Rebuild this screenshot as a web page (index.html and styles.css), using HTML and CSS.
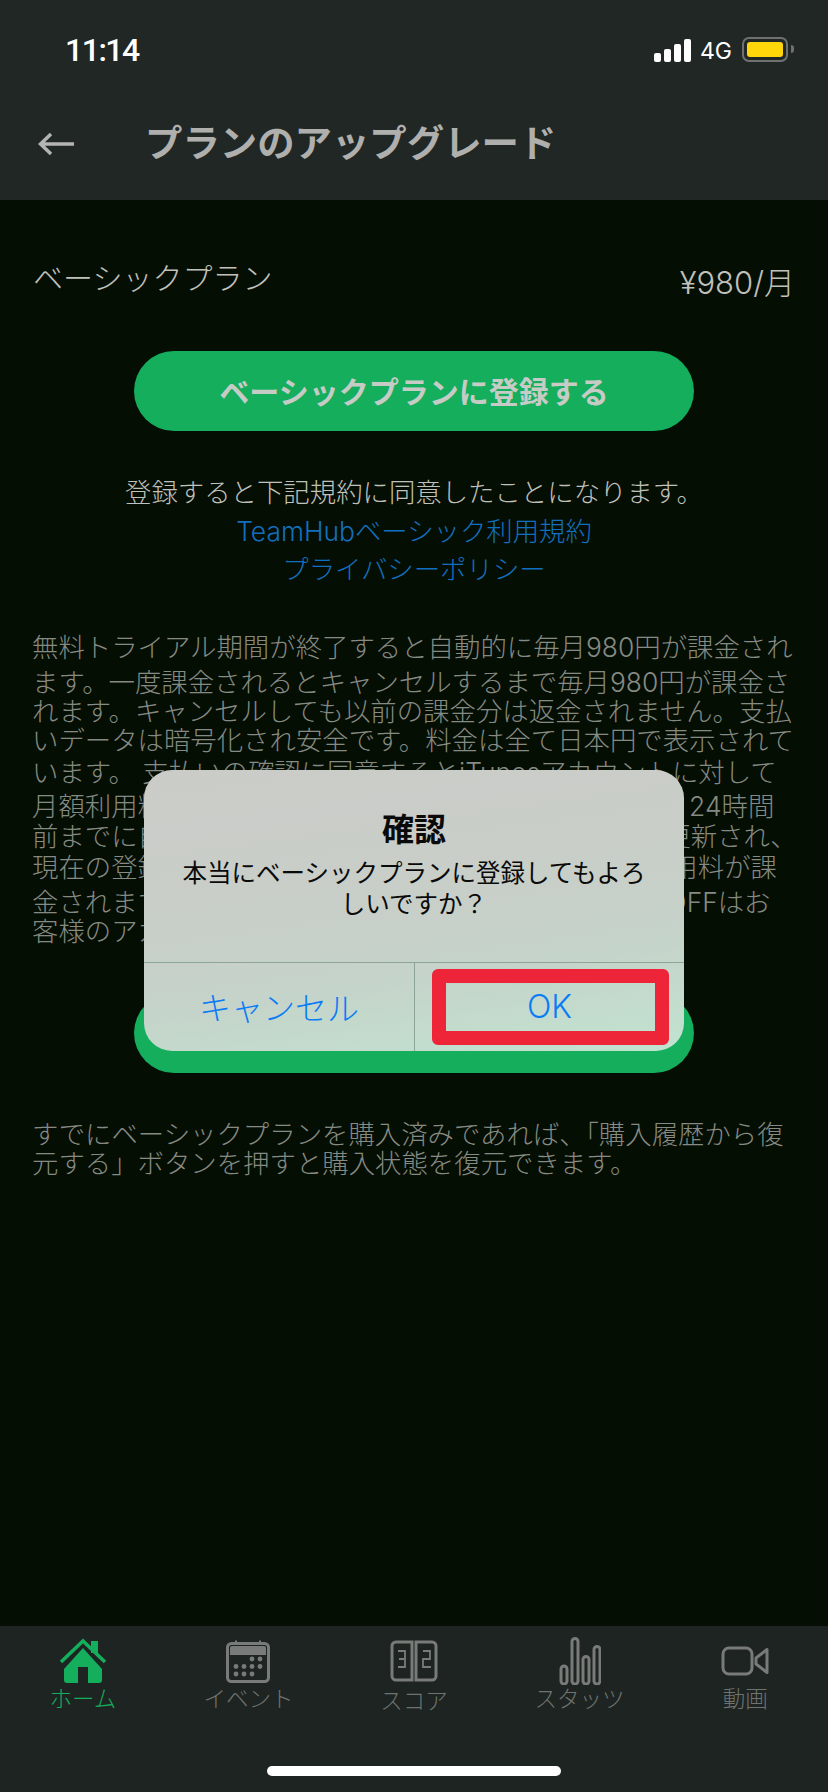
FILE: index.html
```html
<!DOCTYPE html>
<html lang="ja">
<head>
  <meta charset="UTF-8" />
  <meta name="viewport" content="width=device-width, initial-scale=1.0"/>
  <title>プランのアップグレード</title>
  <link rel="stylesheet" href="styles.css">
</head>
<body>

  <div class="screen">
    <header class="top-bar">
      <div class="status-bar">
        <span class="clock">11:14</span>
        <div class="status-right">
          <div class="signal">
            <span class="bar bar-1"></span>
            <span class="bar bar-2"></span>
            <span class="bar bar-3"></span>
            <span class="bar bar-4"></span>
          </div>
          <span class="network">4G</span>
          <div class="battery"><span class="battery-fill"></span></div>
          <span class="battery-nub"></span>
        </div>
      </div>
      <div class="nav-bar">
        <svg class="back-arrow" viewBox="0 0 37 24" width="37" height="24">
          <path d="M36 12H3M13 2 2.500 12 13 22" fill="none" stroke="#b4b4b2" stroke-width="3.500"/>
        </svg>
        <h1 class="nav-title">プランのアップグレード</h1>
      </div>
    </header>

    <main class="content">
      <div class="plan-row">
        <span class="plan-name">ベーシックプラン</span>
        <span class="plan-price">¥980/月</span>
      </div>

      <button class="pill-button">ベーシックプランに登録する</button>

      <div class="terms">
        <p class="terms-note">登録すると下記規約に同意したことになります。</p>
        <a class="terms-link">TeamHubベーシック利用規約</a>
        <a class="terms-link">プライバシーポリシー</a>
      </div>

      <div class="fine-print">
        <div class="line">無料トライアル期間が終了すると自動的に毎月980円が課金され</div>
        <div class="line line-35">ます。一度課金されるとキャンセルするまで毎月980円が課金さ</div>
        <div class="line line-29">れます。キャンセルしても以前の課金分は返金されません。支払</div>
        <div class="line line-29">いデータは暗号化され安全です。料金は全て日本円で表示されて</div>
        <div class="line line-32">います。 支払いの確認に同意するとiTunesアカウントに対して</div>
        <div class="line line-34">月額利用料金が請求されます。現在の契約期間終了日、24時間</div>
        <div class="line line-30">前までに自動更新をオフにしない限り、プランは自動更新され、</div>
        <div class="line line-31">現在の登録期間が終了する前の24時間以内に次月の利用料が課</div>
        <div class="line line-35">金されます。 設定画面からはいつでも自動更新のON/OFFはお</div>
        <div class="line line-29">客様のアカウント設定で変更できます。</div>
      </div>

      <button class="pill-button restore-button">購入履歴から復元する</button>

      <div class="fine-print restore-note">
        <div class="line">すでにベーシックプランを購入済みであれば、「購入履歴から復</div>
        <div class="line line-29">元する」ボタンを押すと購入状態を復元できます。</div>
      </div>
    </main>

    <nav class="tab-bar">
      <div class="tab tab-active">
        <div class="tab-icon">
          <svg viewBox="0 0 48 46" width="48" height="46">
            <rect x="32" y="3" width="7" height="12" fill="#14ae5c"/>
            <path d="M2 24 24 3 46 24" fill="none" stroke="#14ae5c" stroke-width="3.500"/>
            <path d="M5 31 24 10 43 31V42a3 3 0 0 1-3 3H29V29H19V45H8a3 3 0 0 1-3-3Z" fill="#14ae5c"/>
          </svg>
        </div>
        <span class="tab-label">ホーム</span>
      </div>
      <div class="tab">
        <div class="tab-icon">
          <svg viewBox="0 0 44 44" width="44" height="44">
            <rect x="1.500" y="4.500" width="41" height="38" rx="4" fill="none" stroke="#787b79" stroke-width="3"/>
            <path d="M4 16V9a2 2 0 0 1 2-2H38a2 2 0 0 1 2 2V16Z" fill="#787b79"/>
            <path d="M10 1.500V5M34 1.500V5" stroke="#787b79" stroke-width="2"/>
            <g fill="#787b79">
              <circle cx="26" cy="20" r="2.400"/><circle cx="34" cy="20" r="2.400"/>
              <circle cx="10" cy="27.500" r="2.400"/><circle cx="18" cy="27.500" r="2.400"/><circle cx="26" cy="27.500" r="2.400"/><circle cx="34" cy="27.500" r="2.400"/>
              <circle cx="10" cy="35" r="2.400"/><circle cx="18" cy="35" r="2.400"/><circle cx="26" cy="35" r="2.400"/>
            </g>
          </svg>
        </div>
        <span class="tab-label">イベント</span>
      </div>
      <div class="tab tab-score">
        <div class="tab-icon">
          <svg viewBox="0 0 48 42" width="48" height="42">
            <g fill="none" stroke="#787b79">
              <path d="M22 2H6a4 4 0 0 0-4 4V36a4 4 0 0 0 4 4H22ZM26 2H42a4 4 0 0 1 4 4V36a4 4 0 0 1-4 4H26Z" stroke-width="3"/>
              <path d="M8 11H15V27H8M15 19H9M33 11H40V19H33V27H41" stroke-width="1.800"/>
            </g>
          </svg>
        </div>
        <span class="tab-label">スコア</span>
      </div>
      <div class="tab">
        <div class="tab-icon">
          <svg viewBox="0 0 42 48" width="42" height="48">
            <g fill="none" stroke="#787b79" stroke-width="3">
              <rect x="2" y="29" width="6" height="18" rx="3"/>
              <rect x="13" y="1.500" width="6" height="45.500" rx="3"/>
              <rect x="24" y="19.500" width="6" height="27.500" rx="3"/>
              <rect x="35" y="9.500" width="6" height="37.500" rx="3"/>
            </g>
          </svg>
        </div>
        <span class="tab-label">スタッツ</span>
      </div>
      <div class="tab">
        <div class="tab-icon">
          <svg viewBox="0 0 48 30" width="48" height="30">
            <rect x="2" y="2" width="29" height="26" rx="6" fill="none" stroke="#787b79" stroke-width="3"/>
            <path d="M46 3.500V26.500L35 18V12Z" fill="none" stroke="#787b79" stroke-width="3" stroke-linejoin="round"/>
          </svg>
        </div>
        <span class="tab-label">動画</span>
      </div>
      <span class="home-indicator"></span>
    </nav>

    <div class="dialog">
      <div class="dialog-body">
        <h2 class="dialog-title">確認</h2>
        <p class="dialog-text">本当にベーシックプランに登録してもよろしいですか？</p>
      </div>
      <div class="dialog-actions">
        <button class="dialog-button">キャンセル</button>
        <button class="dialog-button">OK</button>
      </div>
      <span class="highlight-box"></span>
    </div>
  </div>

</body>
</html>
```

FILE: styles.css
```css
* {
  box-sizing: border-box;
}

body {
  margin: 0;
  background: #050e02;
  font-family: Inter, "Noto Sans CJK JP", "Noto Sans", sans-serif;
}

p, h1, h2 {
  margin: 0;
}

.screen {
  position: relative;
  display: flex;
  flex-direction: column;
  width: 828px;
  height: 1792px;
  overflow: hidden;
}

/* top */
.top-bar {
  height: 200px;
  background: #212725;
}

.status-bar {
  display: flex;
  justify-content: space-between;
  height: 88px;
  padding: 30px 34px 0 65px;
}

.clock {
  font-family: Roboto, sans-serif;
  font-size: 32px;
  font-weight: 500;
  line-height: 40px;
  letter-spacing: -1.500px;
  color: #fff;
}

.status-right {
  display: flex;
  align-items: flex-start;
  padding-top: 7px;
}

.signal {
  display: flex;
  align-items: flex-end;
  gap: 3px;
  height: 24px;
  margin-top: 1px;
}

.bar {
  width: 7px;
  background: #fff;
  border-radius: 2px;
}

.bar-1 { height: 9px; }
.bar-2 { height: 13px; }
.bar-3 { height: 18px; }
.bar-4 { height: 23px; }

.network {
  margin-left: 9px;
  font-size: 23px;
  line-height: 28px;
  color: #fff;
}

.battery {
  width: 46px;
  height: 25px;
  margin-left: 10px;
  padding: 3px;
  border: 2px solid #6e716f;
  border-radius: 7px;
}

.battery-fill {
  display: block;
  height: 100%;
  background: #ffd60a;
  border-radius: 3px;
}

.battery-nub {
  width: 3px;
  height: 8px;
  margin: 8px 0 0 3px;
  background: #6e716f;
  border-radius: 0 3px 3px 0;
}

.nav-bar {
  display: flex;
  align-items: center;
  height: 112px;
  padding: 0 0 1px 38px;
}

.nav-title {
  margin-left: 70px;
  font-size: 37.400px;
  font-weight: 700;
  line-height: 50px;
  color: #afafad;
}

/* main part */
.content {
  flex: 1;
  padding: 0 33px;
  color: #c0c0bc;
}

.plan-row {
  display: flex;
  justify-content: space-between;
  align-items: flex-end;
  height: 48px;
  margin-top: 54px;
  font-size: 30px;
  font-weight: 300;
  line-height: 48px;
}

.plan-price {
  margin-bottom: -5px;
  font-size: 31px;
}

.pill-button {
  display: block;
  width: 560px;
  height: 80px;
  margin: 49px auto 0;
  padding: 0 0 2px;
  background: #14ae5c;
  border: none;
  border-radius: 40px;
  font-family: inherit;
  font-size: 30px;
  font-weight: 700;
  color: #c6cbc6;
}

.terms {
  margin-top: 42px;
  text-align: center;
  font-size: 26.400px;
  font-weight: 300;
}

.terms-note {
  line-height: 39px;
}

.terms-link {
  display: block;
  line-height: 39px;
  color: #126fbf;
}

.terms-link + .terms-link {
  margin-top: -1px;
}

.fine-print {
  margin: 44px -1px 0;
  font-size: 26.400px;
  font-weight: 300;
  color: #868a84;
}

.line {
  height: 29px;
  line-height: 29px;
  white-space: nowrap;
}

.line-29 { margin-top: 0; }
.line-30 { margin-top: 1px; }
.line-31 { margin-top: 2px; }
.line-32 { margin-top: 3px; }
.line-34 { margin-top: 5px; }
.line-35 { margin-top: 6px; }

.restore-button {
  margin-top: 47px;
}

.restore-note {
  margin-top: 47px;
}

/* tab bar */
.tab-bar {
  position: relative;
  display: grid;
  grid-template-columns: repeat(5, 1fr);
  height: 166px;
  padding-top: 11px;
  background: #1e2421;
}

.tab {
  display: flex;
  flex-direction: column;
  align-items: center;
  color: #6f7370;
}

.tab-active {
  color: #14ae5c;
}

.tab-icon {
  display: flex;
  justify-content: center;
  align-items: center;
  height: 48px;
}

.tab-label {
  font-size: 22.500px;
  font-weight: 300;
  line-height: 28px;
}

.tab-score .tab-label {
  margin-top: 2px;
}

.home-indicator {
  position: absolute;
  left: 267px;
  top: 140px;
  width: 294px;
  height: 10px;
  background: #fff;
  border-radius: 5px;
}

/* confirm dialog */
.dialog {
  position: absolute;
  left: 144px;
  top: 770px;
  display: flex;
  flex-direction: column;
  width: 540px;
  height: 281px;
  background: linear-gradient(172deg, #cbccc8 0%, #c8cec8 45%, #c5d4ca 70%, #c1e3d0 100%);
  border-radius: 28px;
  overflow: hidden;
}

.dialog-body {
  height: 193px;
  padding: 40px 30px 0;
  border-bottom: 1px solid #8ca597;
  text-align: center;
  color: #0a0a0a;
}

.dialog-title {
  font-size: 32px;
  font-weight: 700;
  line-height: 40px;
}

.dialog-text {
  margin-top: 8px;
  font-size: 24.500px;
  line-height: 31px;
}

.dialog-actions {
  display: grid;
  grid-template-columns: 270px 270px;
  flex: 1;
}

.dialog-button {
  padding: 0 0 2px;
  background: none;
  border: none;
  font-family: inherit;
  font-size: 32px;
  font-weight: 300;
  color: #0a7cf5;
}

.dialog-button + .dialog-button {
  border-left: 1px solid #8ca597;
}

.highlight-box {
  position: absolute;
  left: 288px;
  top: 199px;
  width: 237px;
  height: 76px;
  border: 14px solid #ee2539;
  border-radius: 6px;
}
```
